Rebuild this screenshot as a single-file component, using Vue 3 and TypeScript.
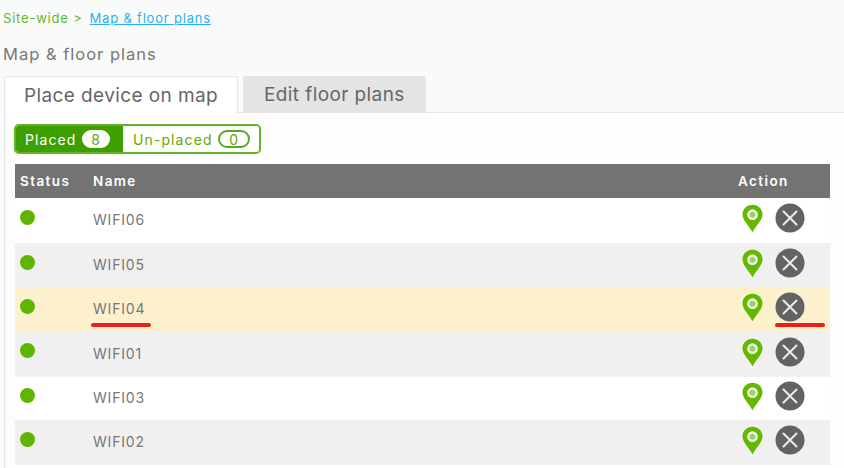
<template>
  <div class="page">
    <div class="crumbs">
      <span class="crumb-root">Site-wide &gt;</span>
      <a class="crumb-link">Map &amp; floor plans</a>
    </div>
    <div class="title">Map &amp; floor plans</div>
    <div class="tabs">
      <div class="tab active">Place device on map</div>
      <div class="tab">Edit floor plans</div>
    </div>
    <div class="panel">
      <div class="toggle">
        <div class="seg seg-on">Placed <span class="count count-on">8</span></div>
        <div class="seg seg-off">Un-placed <span class="count">0</span></div>
      </div>
      <div class="table">
        <div class="row head">
          <div class="col-status">Status</div>
          <div class="col-name">Name</div>
          <div class="col-action">Action</div>
        </div>
        <div
          v-for="d in devices"
          :key="d.name"
          class="row"
          :class="d.tone"
          :style="{ height: d.height + 'px' }"
        >
          <div class="col-status"><span class="dot"></span></div>
          <div class="col-name">{{ d.name }}</div>
          <div class="col-action">
            <svg class="pin" viewBox="0 0 22 30" width="21" height="29">
              <path d="M11 0.5C5 0.5 0.5 5 0.5 10.6c0 6.2 6.400 11.400 10.500 18.900 4.100-7.500 10.500-12.700 10.500-18.900C21.500 5 17 0.500 11 0.500z" fill="#63b800" />
              <circle cx="11" cy="11" r="4.400" fill="#9fd06a" stroke="#f2f8e8" stroke-width="2.400" />
            </svg>
            <svg class="remove" viewBox="0 0 30 30" width="30" height="30">
              <circle cx="15" cy="15" r="14.500" fill="#636363" />
              <path d="M8.500 8.500l13 13M21.500 8.500l-13 13" stroke="#ececec" stroke-width="2" stroke-linecap="round" />
            </svg>
          </div>
          <template v-if="d.mark">
            <span class="mark mark-name"></span>
            <span class="mark mark-action"></span>
          </template>
        </div>
        <div class="row plain tail"></div>
      </div>
    </div>
  </div>
</template>

<script setup lang="ts">
interface Device {
  name: string
  tone: 'plain' | 'grey' | 'picked'
  height: number
  mark?: boolean
}

const devices: Device[] = [
  { name: 'WIFI06', tone: 'plain', height: 45 },
  { name: 'WIFI05', tone: 'grey', height: 45 },
  { name: 'WIFI04', tone: 'picked', height: 43, mark: true },
  { name: 'WIFI01', tone: 'grey', height: 46 },
  { name: 'WIFI03', tone: 'plain', height: 43 },
  { name: 'WIFI02', tone: 'grey', height: 45 }
]
</script>

<style>
html,
body {
  margin: 0;
  background: #f9fbfa;
  overflow: hidden;
}
</style>

<style scoped>
.page {
  width: 844px;
  height: 468px;
  overflow: hidden;
  font-family: Inter, "Noto Sans", sans-serif;
  color: #6b6b6b;
  box-sizing: border-box;
  padding: 10px 0 0 3px;
}

.crumbs {
  display: flex;
  align-items: center;
  gap: 7px;
  height: 16px;
  font-size: 13px;
  letter-spacing: 0.8px;
}

.crumb-root {
  color: #62b82a;
}

.crumb-link {
  color: #2ab0f5;
  text-decoration: underline;
}

.title {
  margin-top: 18px;
  height: 20px;
  line-height: 20px;
  font-size: 16.5px;
  letter-spacing: 1px;
  color: #777;
}

.tabs {
  display: flex;
  gap: 5px;
  margin: 12px 0 0 1px;
  height: 37px;
  position: relative;
  z-index: 1;
}

.tab {
  display: flex;
  align-items: center;
  padding: 0 21px;
  width: 183px;
  box-sizing: border-box;
  font-size: 19px;
  letter-spacing: 0.4px;
  white-space: nowrap;
  background: #e4e4e4;
  border-radius: 3px 3px 0 0;
  color: #666;
}

.tab.active {
  width: 234px;
  padding-left: 19px;
  background: #fff;
  border: 1px solid #e6e6e6;
  border-bottom: none;
}

.panel {
  margin-left: 1px;
  background: #fcfdfc;
  border-left: 1px solid #e6e6e6;
  border-top: 1px solid #e6e6e6;
  margin-top: -1px;
  padding: 11px 14px 0 9px;
  height: 360px;
}

.toggle {
  display: inline-flex;
  height: 30px;
  box-sizing: border-box;
  border: 2px solid #62b32a;
  border-radius: 5px;
  overflow: hidden;
  font-size: 14px;
  letter-spacing: 1.1px;
  color: #62a800;
}

.seg {
  display: flex;
  align-items: center;
  gap: 5px;
  box-sizing: border-box;
  background: #fff;
}

.seg-on {
  width: 107px;
  padding-left: 9px;
  background: #3f9f00;
  color: #fff;
}

.seg-off {
  width: 136px;
  padding-left: 10px;
}

.count {
  display: inline-block;
  width: 32px;
  height: 18px;
  text-align: center;
  line-height: 15px;
  letter-spacing: 0;
  border: 2px solid #5aa81c;
  border-radius: 10px;
  color: #62a800;
  box-sizing: border-box;
}

.count-on {
  width: 28px;
  background: #fff;
  border-color: #fff;
}

.table {
  margin-top: 10px;
  margin-left: 1px;
}

.row {
  position: relative;
  display: flex;
  align-items: center;
  font-size: 14px;
  letter-spacing: 0.8px;
  color: #777;
}

.plain {
  background: #fff;
}

.grey {
  background: #f0f0f0;
}

.picked {
  background: #fdf1cd;
}

.tail {
  height: 10px;
}

.head {
  height: 34px;
  background: #737373;
  color: #fff;
  font-weight: 600;
  font-size: 13.5px;
  letter-spacing: 1.4px;
}

.col-status {
  width: 78px;
  padding-left: 5px;
  box-sizing: border-box;
}

.col-name {
  flex: 1;
  margin-bottom: 2px;
}

.head .col-name,
.head .col-status {
  margin-bottom: 0;
}

.col-action {
  display: flex;
  align-items: center;
  gap: 12px;
  width: 92px;
  padding-left: 4px;
  box-sizing: border-box;
}

.head .col-action {
  padding-left: 0;
}

.dot {
  display: block;
  width: 15px;
  height: 15px;
  margin-bottom: 7px;
  border-radius: 50%;
  background: #5fb400;
}

.pin {
  display: block;
  margin-bottom: 4px;
}

.remove {
  display: block;
  margin-bottom: 5px;
}

/* red annotation strokes drawn over the row */
.mark {
  position: absolute;
  top: 35px;
  height: 4px;
  border-radius: 2px;
  background: #e81f1f;
}

.mark-name {
  left: 76px;
  width: 60px;
}

.mark-action {
  left: 760px;
  width: 50px;
}
</style>
